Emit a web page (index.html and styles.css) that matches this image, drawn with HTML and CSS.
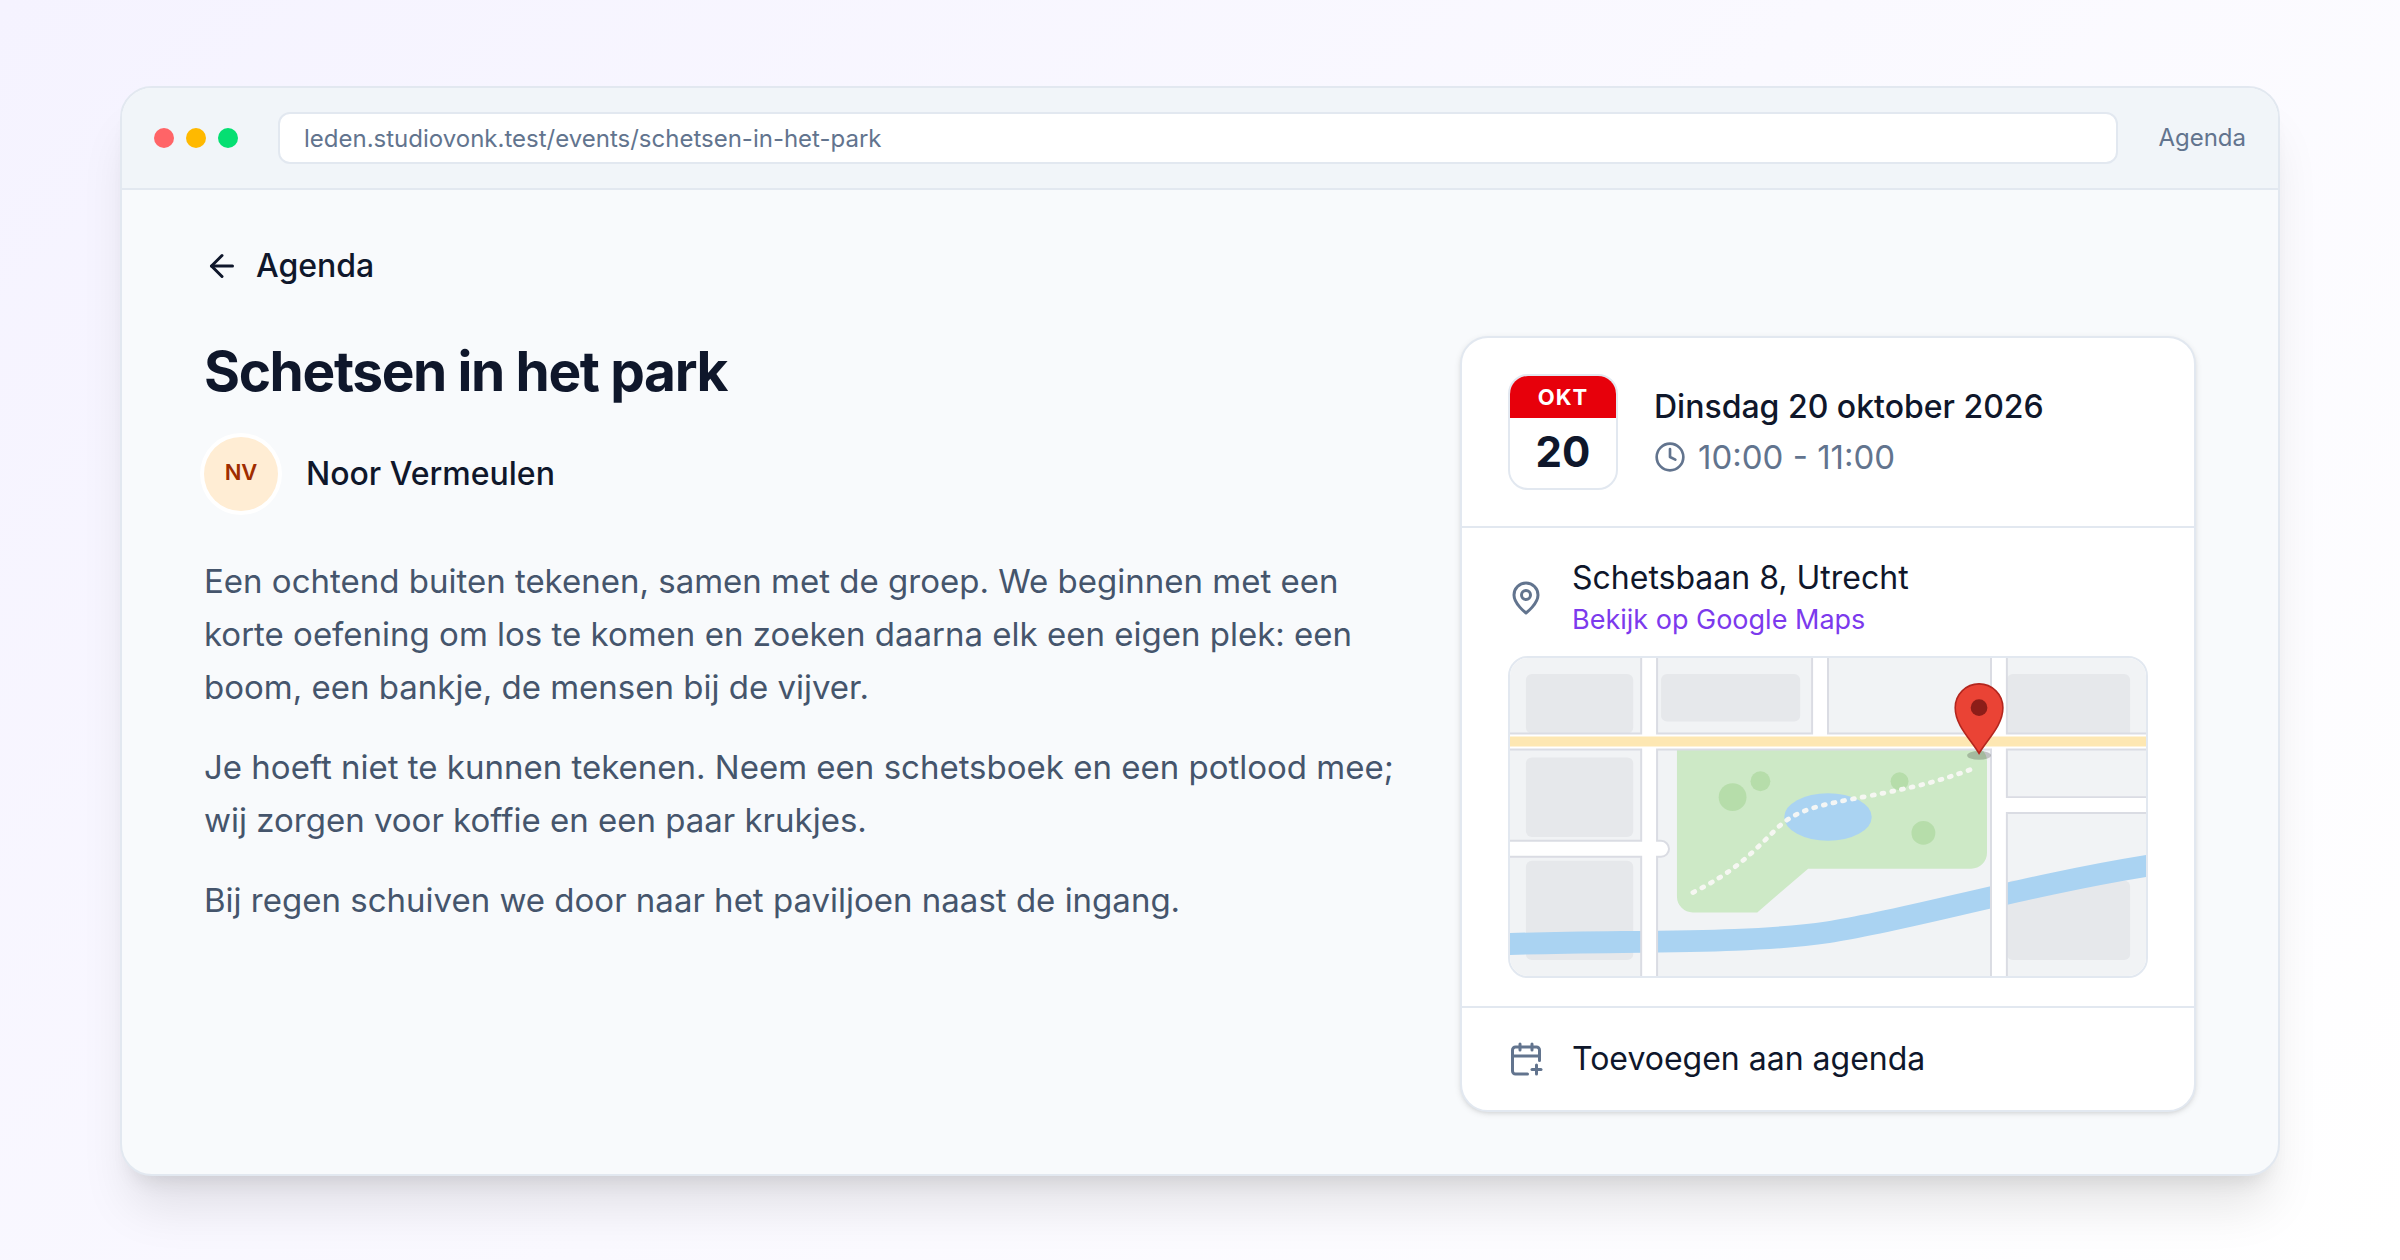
FILE: index.html
```html
<!DOCTYPE html>
<html lang="nl">
<head>
<meta charset="utf-8">
<meta name="viewport" content="width=device-width, initial-scale=1">
<title>Schetsen in het park</title>
<link rel="stylesheet" href="styles.css">
</head>
<body>
<div class="window">
  <header class="toolbar">
    <div class="lights">
      <span class="light light-red"></span>
      <span class="light light-amber"></span>
      <span class="light light-green"></span>
    </div>
    <input class="address" type="text" aria-label="Adres" value="leden.studiovonk.test/events/schetsen-in-het-park" readonly>
    <span class="toolbar-label">Agenda</span>
  </header>
  <div class="page">
    <a class="back" href="#agenda">
      <svg class="icon" viewBox="0 0 24 24" aria-hidden="true"><path d="m12 19-7-7 7-7"/><path d="M19 12H5"/></svg>
      Agenda
    </a>
    <div class="columns">
      <main class="event">
        <h1 class="title">Schetsen in het park</h1>
        <div class="host">
          <span class="avatar">NV</span>
          <span class="host-name">Noor Vermeulen</span>
        </div>
        <div class="description">
          <p>Een ochtend buiten tekenen, samen met de groep. We beginnen met een korte oefening om los te komen en zoeken daarna elk een eigen plek: een boom, een bankje, de mensen bij de vijver.</p>
          <p>Je hoeft niet te kunnen tekenen. Neem een schetsboek en een potlood mee; wij zorgen voor koffie en een paar krukjes.</p>
          <p>Bij regen schuiven we door naar het paviljoen naast de ingang.</p>
        </div>
      </main>
      <aside class="card">
        <section class="when">
          <div class="date-tile">
            <span class="month">OKT</span>
            <span class="day">20</span>
          </div>
          <div class="when-text">
            <div class="date">Dinsdag 20 oktober 2026</div>
            <div class="time">
              <svg class="icon icon-small" viewBox="0 0 24 24" aria-hidden="true"><circle cx="12" cy="12" r="10"/><path d="M12 6v6l4 2"/></svg>
              10:00 - 11:00
            </div>
          </div>
        </section>
        <section class="where">
          <div class="place">
            <svg class="icon icon-muted" viewBox="0 0 24 24" aria-hidden="true"><path d="M20 10c0 6-8 12-8 12s-8-6-8-12a8 8 0 0 1 16 0Z"/><circle cx="12" cy="10" r="3"/></svg>
            <div class="place-text">
              <div class="address-line">Schetsbaan 8, Utrecht</div>
              <a class="maps-link" href="#kaart">Bekijk op Google Maps</a>
            </div>
          </div>
          <div class="map" id="kaart">
            <svg viewBox="0 0 320 160" role="img" aria-label="Kaart van het park">
              <rect width="320" height="160" fill="#f1f3f5"/>
              <g fill="#e6e8eb">
                <rect x="8" y="8" width="54" height="30" rx="3"/>
                <rect x="76" y="8" width="70" height="24" rx="3"/>
                <rect x="250" y="8" width="62" height="34" rx="3"/>
                <rect x="8" y="50" width="54" height="40" rx="3"/>
                <rect x="8" y="102" width="54" height="50" rx="3"/>
                <rect x="250" y="112" width="62" height="40" rx="3"/>
              </g>
              <path d="M84 44H232a8 8 0 0 1 8 8V98a8 8 0 0 1-8 8H150L124.400 128H92a8 8 0 0 1-8-8Z" fill="#cde9c6"/>
              <g fill="#b6ddaa">
                <circle cx="112" cy="70" r="7"/>
                <circle cx="126" cy="62" r="5"/>
                <circle cx="196" cy="62" r="4.500"/>
                <circle cx="208" cy="88" r="6"/>
              </g>
              <path d="M-4 144C60 142 120 144 160 138S260 114 324 104" fill="none" stroke="#aad3f2" stroke-width="11"/>
              <ellipse cx="160" cy="80" rx="22" ry="12" fill="#aad3f2"/>
              <path d="M92 118C112 108 120 100 134 86C144 76 156 74 180 69.500C204 65 216 62 232 56" fill="none" stroke="#f8f8f4" stroke-opacity=".95" stroke-width="2.400" stroke-linecap="round" stroke-dasharray="1 4"/>
              <g fill="none" stroke-linecap="round">
                <path d="M70-6V166M156-6V42M246-6V166M-6 42H326M-6 96H76M246 74H326" stroke="#dadce3" stroke-width="9"/>
                <path d="M70-6V166M156-6V42M246-6V166M-6 42H326M-6 96H76M246 74H326" stroke="#fff" stroke-width="7"/>
                <path d="M-6 42H326" stroke="#fde7b2" stroke-width="5"/>
              </g>
              <ellipse cx="236" cy="49" rx="6" ry="2.200" fill="#000" fill-opacity=".2"/>
              <path d="M236 48C232 41 224 34 224 25a12 12 0 0 1 24 0C248 34 240 41 236 48Z" fill="#ea4335" stroke="#b3261e" stroke-width=".8"/>
              <circle cx="236" cy="25" r="4.200" fill="#8c1d18"/>
            </svg>
          </div>
        </section>
        <button class="add" type="button">
          <svg class="icon icon-muted" viewBox="0 0 24 24" aria-hidden="true"><path d="M8 2v4"/><path d="M16 2v4"/><path d="M21 13V6a2 2 0 0 0-2-2H5a2 2 0 0 0-2 2v14a2 2 0 0 0 2 2h8"/><path d="M3 10h18"/><path d="M16 19h6"/><path d="M19 16v6"/></svg>
          Toevoegen aan agenda
        </button>
      </aside>
    </div>
  </div>
</div>
</body>
</html>
```
FILE: styles.css
```css
* {
  box-sizing: border-box;
}

body {
  margin: 0;
  min-height: 100vh;
  padding: 42px 120px 40px;
  display: flex;
  flex-direction: column;
  justify-content: center;
  background: linear-gradient(135deg, #f5f3ff, #fff);
  color: #0f172b;
  font-family: Inter, "Liberation Sans", sans-serif;
  font-size: 32px;
  line-height: 48px;
}

.window {
  border: 2px solid #e2e8f0;
  border-radius: 32px;
  overflow: hidden;
  background: #f8fafc;
  box-shadow: 0 40px 50px -10px rgb(0 0 0 / .1), 0 16px 20px -12px rgb(0 0 0 / .1);
}

.toolbar {
  display: flex;
  align-items: center;
  gap: 40px;
  padding: 24px 32px;
  border-bottom: 2px solid #e2e8f0;
  background: #f1f5f9;
  color: #62748e;
  font-size: 24px;
  line-height: 32px;
}

.lights {
  display: flex;
  gap: 12px;
}

.light {
  width: 20px;
  height: 20px;
  border-radius: 50%;
}

.light-red { background: #ff6467; }
.light-amber { background: #ffb900; }
.light-green { background: #05df72; }

.address {
  flex: 1;
  min-width: 0;
  height: 52px;
  padding: 0 24px;
  border: 2px solid #e2e8f0;
  border-radius: 12px;
  background: #fff;
  color: inherit;
  font: inherit;
}

.page {
  padding: 52px 82px 62px;
}

.back {
  display: flex;
  align-items: center;
  gap: 16px;
  width: fit-content;
  color: inherit;
  font-weight: 500;
  text-decoration: none;
}

.icon {
  flex: none;
  width: 36px;
  height: 36px;
  fill: none;
  stroke: currentColor;
  stroke-width: 2;
  stroke-linecap: round;
  stroke-linejoin: round;
}

.icon-small {
  width: 32px;
  height: 32px;
}

.icon-muted {
  color: #62748e;
}

.columns {
  display: grid;
  grid-template-columns: minmax(0, 1fr) 736px;
  gap: 64px;
  align-items: start;
  margin-top: 46px;
}

.title {
  margin: 0;
  font-size: 55px;
  font-weight: 700;
  letter-spacing: -0.025em;
  line-height: 70px;
}

.host {
  display: flex;
  align-items: center;
  gap: 28px;
  margin-top: 31px;
  font-weight: 500;
}

.avatar {
  display: flex;
  justify-content: center;
  width: 74px;
  height: 74px;
  border-radius: 50%;
  background: #ffedd4;
  box-shadow: 0 0 0 4px #fff;
  color: #9f2d00;
  font-size: 22px;
  font-weight: 600;
  line-height: 70px;
}

.description {
  margin-top: 44px;
  color: #45556c;
  font-size: 33px;
  line-height: 53px;
}

.description p {
  margin: 0 0 27px;
}

.card {
  border: 2px solid #e2e8f0;
  border-radius: 28px;
  background: #fff;
  box-shadow: 0 2px 6px rgb(0 0 0 / .1), 0 2px 4px -2px rgb(0 0 0 / .1);
}

.when {
  display: flex;
  align-items: center;
  gap: 36px;
  padding: 36px 46px;
}

.date-tile {
  display: flex;
  flex-direction: column;
  width: 110px;
  height: 116px;
  border: 2px solid #e2e8f0;
  border-radius: 20px;
  overflow: hidden;
  text-align: center;
}

.month {
  background: #e7000b;
  color: #fff;
  font-size: 22px;
  font-weight: 700;
  letter-spacing: 1px;
  line-height: 42px;
}

.day {
  font-size: 42px;
  font-weight: 700;
  line-height: 68px;
}

.when-text {
  display: grid;
  gap: 2px;
}

.date {
  font-weight: 500;
}

.time {
  display: flex;
  align-items: center;
  gap: 12px;
  color: #62748e;
  font-size: 33px;
}

.where {
  padding: 28px 46px;
  border-top: 2px solid #e2e8f0;
}

.place {
  display: flex;
  align-items: center;
  gap: 28px;
}

.address-line {
  line-height: 44px;
}

.maps-link {
  display: block;
  color: #7c3aed;
  font-size: 27px;
  line-height: 40px;
  text-decoration: none;
}

.map {
  margin-top: 16px;
  border: 2px solid #e2e8f0;
  border-radius: 20px;
  overflow: hidden;
}

.map svg {
  display: block;
  width: 100%;
}

.add {
  display: flex;
  align-items: center;
  gap: 28px;
  width: 100%;
  padding: 28px 46px;
  border: 0;
  border-top: 2px solid #e2e8f0;
  background: none;
  color: inherit;
  font: inherit;
  line-height: 46px;
  text-align: left;
}
```
